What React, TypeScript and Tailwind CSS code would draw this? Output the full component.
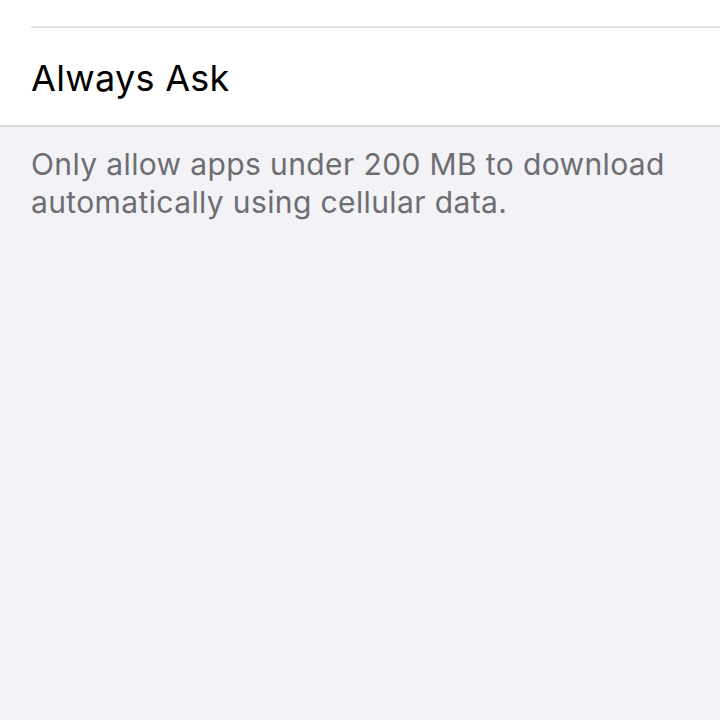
export default function App() {
  return (
    <div className="w-[720px] h-[720px] bg-[#f2f2f7] flex flex-col" style={{ fontFamily: "Inter, 'Noto Sans', sans-serif" }}>
      <div className="bg-white border-b-[2px] border-[#d9d9de]">
        <div className="h-[26px]" />
        <div className="ml-[31px] border-t-[2px] border-[#e3e3e6] h-[99px] flex items-center">
          <span className="text-[36px] text-black tracking-[0.3px] leading-none pt-[3px]">Always Ask</span>
        </div>
      </div>
      <div className="px-[31px] pt-[18px] text-[30px] leading-[38px] text-[#6d6d72] tracking-[0.38px]">
        Only allow apps under 200 MB to download automatically using cellular data.
      </div>
    </div>
  );
}
